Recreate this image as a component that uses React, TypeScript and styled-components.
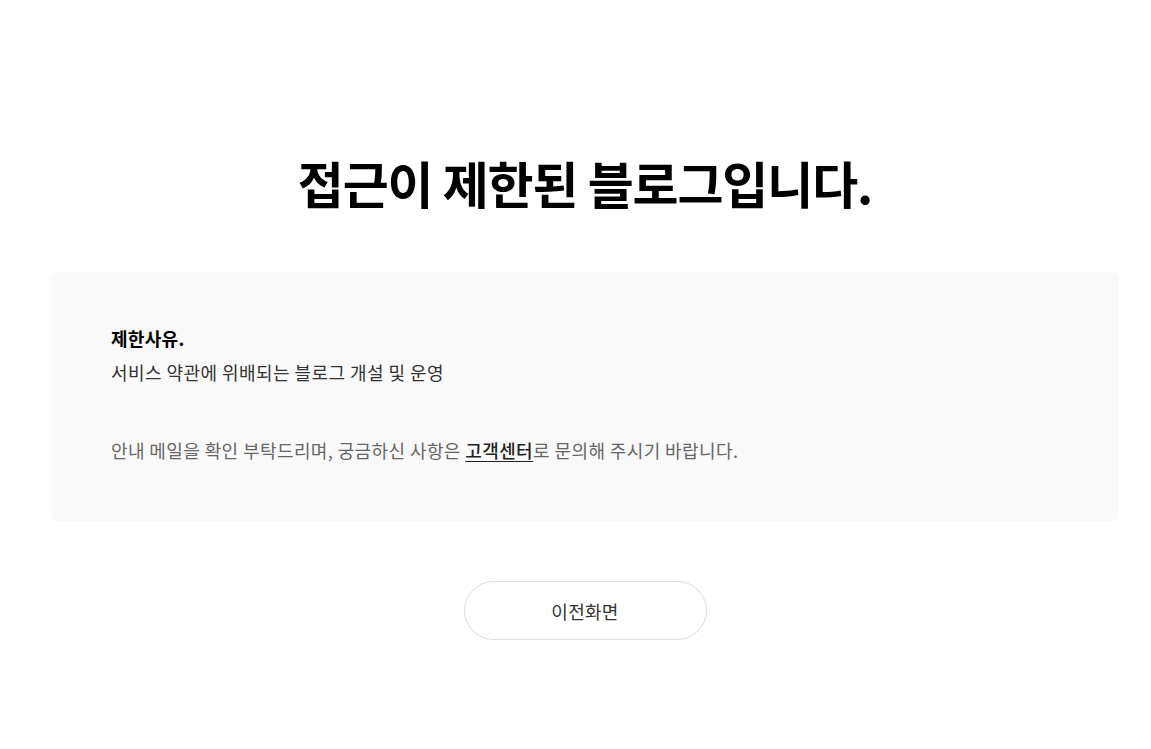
import React from "react";
import styled, { createGlobalStyle } from "styled-components";

const Global = createGlobalStyle`
  html, body { margin: 0; padding: 0; background: #fff; }
  body { font-family: "Noto Sans CJK KR", "Noto Sans", sans-serif; color: #000; }
`;

const Page = styled.main`
  width: 100%;
  display: flex;
  flex-direction: column;
  align-items: center;
  padding: 142px 0 0 19px;
  box-sizing: border-box;
`;

const Title = styled.h1`
  margin: 0;
  font-size: 50px;
  font-weight: 700;
  letter-spacing: -1.1px;
  line-height: 80px;
  color: #000;
`;

const InfoBox = styled.section`
  margin-top: 50px;
  width: 1068px;
  height: 249px;
  box-sizing: border-box;
  background: #f9f9f9;
  border-radius: 6px;
  padding: 53px 60px;
  display: flex;
  flex-direction: column;
`;

const ReasonLabel = styled.strong`
  font-size: 18px;
  font-weight: 700;
  line-height: 27px;
  letter-spacing: 0.3px;
  color: #000;
`;

const ReasonText = styled.p`
  margin: 7px 0 0;
  font-size: 18px;
  line-height: 27px;
  letter-spacing: 0.45px;
  color: #333;
`;

const Notice = styled.p`
  margin: 51px 0 0;
  font-size: 18px;
  line-height: 27px;
  letter-spacing: 0.4px;
  color: #666;
`;

const HelpLink = styled.a`
  color: #222;
  font-weight: 500;
  text-decoration: underline;
  text-underline-offset: 3px;
`;

const BackButton = styled.button`
  margin-top: 60px;
  width: 243px;
  height: 59px;
  border: 1px solid #dcdcdc;
  border-radius: 30px;
  background: #fff;
  font-family: inherit;
  font-size: 18px;
  color: #333;
  letter-spacing: 0.3px;
  cursor: pointer;
`;

export default function App() {
  return (
    <>
      <Global />
      <Page>
        <Title>접근이 제한된 블로그입니다.</Title>
        <InfoBox>
          <ReasonLabel>제한사유.</ReasonLabel>
          <ReasonText>서비스 약관에 위배되는 블로그 개설 및 운영</ReasonText>
          <Notice>
            안내 메일을 확인 부탁드리며, 궁금하신 사항은 <HelpLink href="#">고객센터</HelpLink>로 문의해 주시기 바랍니다.
          </Notice>
        </InfoBox>
        <BackButton type="button">이전화면</BackButton>
      </Page>
    </>
  );
}
